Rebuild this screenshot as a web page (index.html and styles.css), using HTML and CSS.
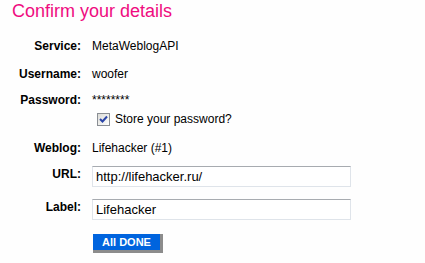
FILE: index.html
```html
<!DOCTYPE html>
<html>
<head>
<meta charset="utf-8">
<link rel="stylesheet" href="styles.css">
</head>
<body>
<h1 class="title">Confirm your details</h1>
<div class="form">
  <div class="row row-service">
    <div class="label">Service:</div>
    <div class="value">MetaWeblogAPI</div>
  </div>
  <div class="row row-user">
    <div class="label">Username:</div>
    <div class="value">woofer</div>
  </div>
  <div class="row row-pass">
    <div class="label">Password:</div>
    <div class="value">********</div>
  </div>
  <div class="row row-store">
    <div class="label"></div>
    <div class="value store">
      <span class="check"><svg width="11" height="11" viewBox="0 0 11 11"><path d="M2 5 L4.5 7.5 L9 2.5" fill="none" stroke="#2b45a8" stroke-width="2"/></svg></span>
      <span>Store your password?</span>
    </div>
  </div>
  <div class="row row-weblog">
    <div class="label">Weblog:</div>
    <div class="value">Lifehacker (#1)</div>
  </div>
  <div class="row row-url">
    <div class="label field-label">URL:</div>
    <div class="value"><input class="field" type="text" value="http://lifehacker.ru/"></div>
  </div>
  <div class="row row-lbl">
    <div class="label field-label">Label:</div>
    <div class="value"><input class="field" type="text" value="Lifehacker"></div>
  </div>
  <div class="row row-btn">
    <div class="label"></div>
    <div class="value"><button class="done">All DONE</button></div>
  </div>
</div>
</body>
</html>
```
FILE: styles.css
```css
html, body {
  margin: 0;
  padding: 0;
  background: #fefefe;
}
body {
  font-family: "Liberation Sans", Arial, sans-serif;
  font-size: 12px;
  line-height: 14px;
  color: #000;
}
.title {
  margin: 0;
  padding: 1px 0 0 12px;
  font-size: 18px;
  line-height: 20px;
  font-weight: normal;
  color: #ef0c80;
}
.form {
  display: flex;
  flex-direction: column;
}
.row {
  display: flex;
  align-items: flex-start;
}
.label {
  width: 81px;
  flex: none;
  text-align: right;
  font-weight: bold;
  margin-right: 11px;
}
.value {
  flex: none;
}
.row-service { margin-top: 18px; }
.row-user { margin-top: 14px; }
.row-pass { margin-top: 12px; }
.row-store { margin-top: 5px; }
.row-weblog { margin-top: 15px; }
.row-url { margin-top: 11px; }
.row-lbl { margin-top: 12px; }
.row-btn { margin-top: 14px; }
.store {
  display: flex;
  align-items: center;
  padding-left: 5px;
}
.check {
  display: inline-flex;
  align-items: center;
  justify-content: center;
  width: 11px;
  height: 11px;
  border: 1px solid #8a8e94;
  background: linear-gradient(135deg, #dcdcd8 0%, #f4f4f2 70%, #ffffff 100%);
  margin-right: 5px;
}
.check svg { display: block; }
.field-label { padding-top: 1px; }
.field {
  display: block;
  box-sizing: border-box;
  width: 259px;
  height: 21px;
  margin: 0;
  padding: 0 0 0 3px;
  border: 1px solid #dfe4ea;
  border-top-color: #a7abb0;
  background: #fff;
  font-family: "Liberation Sans", Arial, sans-serif;
  font-size: 13px;
  color: #000;
  outline: none;
}
.done {
  display: block;
  box-sizing: content-box;
  width: 67px;
  height: 16px;
  margin: 0 0 0 1px;
  padding: 0;
  border: 0;
  border-right: 3px solid #8c8c8c;
  border-bottom: 3px solid #8c8c8c;
  background: #0064de;
  color: #fff;
  font-family: "Liberation Sans", Arial, sans-serif;
  font-size: 11px;
  font-weight: bold;
  line-height: 16px;
  text-align: center;
}
```
